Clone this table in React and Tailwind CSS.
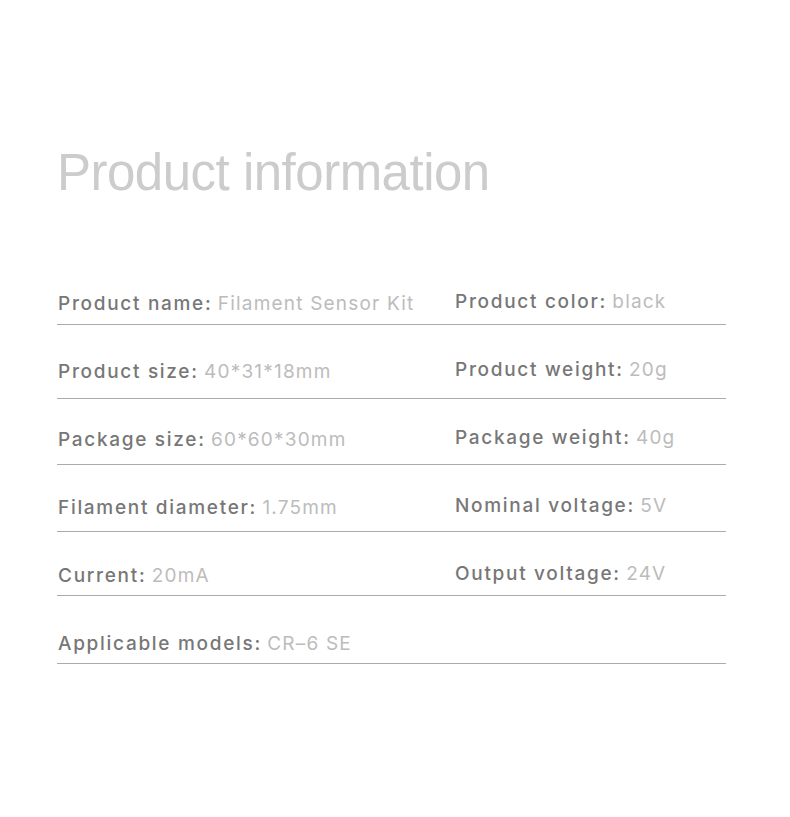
export default function App() {
  const rows = [
    { l: ["Product name:", "Filament Sensor Kit"], r: ["Product color:", "black"], pad: "pt-[96px] pb-[11px]" },
    { l: ["Product size:", "40*31*18mm"], r: ["Product weight:", "20g"], pad: "pt-[37px] pb-[17px]" },
    { l: ["Package size:", "60*60*30mm"], r: ["Package weight:", "40g"], pad: "pt-[31px] pb-[15px]" },
    { l: ["Filament diameter:", "1.75mm"], r: ["Nominal voltage:", "5V"], pad: "pt-[33px] pb-[14px]" },
    { l: ["Current:", "20mA"], r: ["Output voltage:", "24V"], pad: "pt-[34px] pb-[10px]" },
    { l: ["Applicable models:", "CR–6 SE"], r: null, pad: "pt-[38px] pb-[10px]" },
  ];
  const Cell = ({ d }) =>
    d ? (
      <span className="whitespace-nowrap">
        <span className="text-[#777777] font-medium tracking-[1.7px]">{d[0]}</span>{" "}
        <span className="text-[#bcbcbc] tracking-[1.2px]">{d[1]}</span>
      </span>
    ) : null;
  return (
    <div className="w-[790px] h-[817px] bg-white">
      <div className="pl-[57px] pt-[147px] w-[726px]">
        <h1
          className="text-[51px] leading-none text-[#cccccc] font-normal tracking-[-0.5px]"
          style={{ fontFamily: '"Liberation Sans", Arial, sans-serif' }}
        >
          Product information
        </h1>
        {rows.map((row, i) => (
          <div
            key={i}
            className={`${row.pad} border-b border-[#ababab] flex text-[19px] leading-[19px]`}
            style={{ fontFamily: 'Inter, "Liberation Sans", sans-serif' }}
          >
            <div className="w-[398px] pl-[1px]">
              <Cell d={row.l} />
            </div>
            <div className="-mt-[2px]">
              <Cell d={row.r} />
            </div>
          </div>
        ))}
      </div>
    </div>
  );
}
